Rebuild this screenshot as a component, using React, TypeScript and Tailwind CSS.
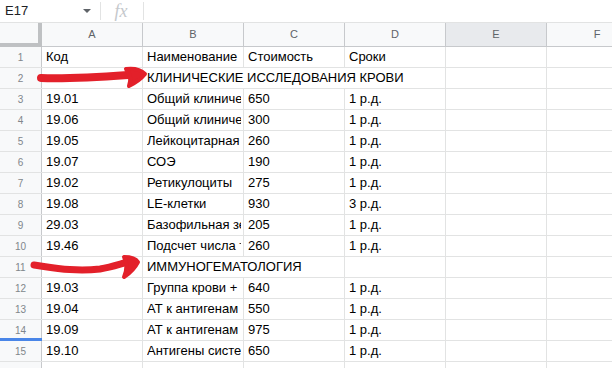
import React from "react";

type Row = { n: number; a?: string; b?: string; c?: string; d?: string; span?: 2 | 3 };

const rows: Row[] = [
  { n: 1, a: "Код", b: "Наименование", c: "Стоимость", d: "Сроки" },
  { n: 2, b: "КЛИНИЧЕСКИЕ ИССЛЕДОВАНИЯ КРОВИ", span: 3 },
  { n: 3, a: "19.01", b: "Общий клинический анализ крови", c: "650", d: "1 р.д." },
  { n: 4, a: "19.06", b: "Общий клинический анализ", c: "300", d: "1 р.д." },
  { n: 5, a: "19.05", b: "Лейкоцитарная формула", c: "260", d: "1 р.д." },
  { n: 6, a: "19.07", b: "СОЭ", c: "190", d: "1 р.д." },
  { n: 7, a: "19.02", b: "Ретикулоциты", c: "275", d: "1 р.д." },
  { n: 8, a: "19.08", b: "LE-клетки", c: "930", d: "3 р.д." },
  { n: 9, a: "29.03", b: "Базофильная зернистость", c: "205", d: "1 р.д." },
  { n: 10, a: "19.46", b: "Подсчет числа тромбоцитов", c: "260", d: "1 р.д." },
  { n: 11, b: "ИММУНОГЕМАТОЛОГИЯ", span: 2 },
  { n: 12, a: "19.03", b: "Группа крови + резус", c: "640", d: "1 р.д." },
  { n: 13, a: "19.04", b: "АТ к антигенам эритроцитов", c: "550", d: "1 р.д." },
  { n: 14, a: "19.09", b: "АТ к антигенам системы", c: "975", d: "1 р.д." },
  { n: 15, a: "19.10", b: "Антигены системы Kell", c: "650", d: "1 р.д." },
  { n: 16 },
];

function Cell({ text, w = "w-[101px]" }: { text?: string; w?: string }) {
  return (
    <div
      className={`flex h-full shrink-0 items-end border-r border-[#e2e3e3] pb-[1px] pl-[4px] pr-[2px] ${w}`}
    >
      <div className="min-w-0 flex-1 overflow-hidden whitespace-nowrap">{text}</div>
    </div>
  );
}

export default function App() {
  return (
    <div
      className="relative h-[368px] w-[612px] overflow-hidden bg-white text-black"
      style={{ fontFamily: '"Liberation Sans", Arial, sans-serif' }}
    >
      {/* formula bar */}
      <div className="flex h-[23px] items-center border-b border-[#e2e3e3] bg-white">
        <div className="flex w-[100px] items-center justify-between pl-[5px] pr-[9px] text-[13px] text-[#202124]">
          <span>E17</span>
          <span className="h-0 w-0 border-x-[4px] border-t-[4px] border-x-transparent border-t-[#5f6368]" />
        </div>
        <div className="h-[18px] w-px bg-[#e2e3e3]" />
        <div
          className="flex w-[42px] justify-center pr-[2px] text-[18px] italic text-[#c5c8cc]"
          style={{ fontFamily: '"Liberation Serif", serif' }}
        >
          fx
        </div>
        <div className="h-[18px] w-px bg-[#e2e3e3]" />
      </div>

      {/* column headers */}
      <div className="flex h-[24px] bg-[#f8f9fa] text-[11px] text-[#5f6368]">
        <div className="h-full w-[42px] shrink-0 border-b-[4px] border-r-[4px] border-[#bfc1c3] bg-[#f8f9fa]" />
        {["A", "B", "C", "D", "E", "F"].map((l) => (
          <div
            key={l}
            className={`flex h-full w-[101px] shrink-0 items-center justify-center border-b border-r border-[#c7c9cc] ${
              l === "E" ? "bg-[#e8eaed]" : ""
            }`}
          >
            {l}
          </div>
        ))}
      </div>

      {/* rows */}
      <div className="text-[13px]">
        {rows.map((r) => (
          <div key={r.n} className="flex h-[21px] border-b border-[#e2e3e3]">
            <div className="relative flex h-full w-[42px] shrink-0 items-center justify-center border-r border-[#c7c9cc] bg-[#f8f9fa] text-[10px] text-[#80868b]">
              {r.n}
              {r.n === 14 && (
                <div className="absolute bottom-[-1px] left-0 h-[3px] w-[42px] bg-[#4a86e8]" />
              )}
            </div>
            <Cell text={r.a} />
            {r.span === 3 ? (
              <Cell text={r.b} w="w-[303px]" />
            ) : r.span === 2 ? (
              <>
                <Cell text={r.b} w="w-[202px]" />
                <Cell />
              </>
            ) : (
              <>
                <Cell text={r.b} />
                <Cell text={r.c} />
                <Cell text={r.d} />
              </>
            )}
            <Cell />
            <Cell />
          </div>
        ))}
      </div>

      {/* red hand-drawn arrows (annotation overlay) */}
      <svg className="pointer-events-none absolute left-0 top-0" width="612" height="368">
        <g fill="none" stroke="#e3202a" strokeLinecap="round" strokeLinejoin="round">
          <path d="M41 78 C 70 79, 100 77, 128 75" strokeWidth="8" />
          <path
            d="M126 69 C 134 68, 141 70, 145 74 C 141 79, 135 83, 129 86 C 131 80, 131 76, 126 69 Z"
            fill="#e3202a"
            strokeWidth="4"
          />
          <path d="M34 265 C 55 268, 75 272, 100 269 C 112 267, 120 264, 128 262" strokeWidth="7" />
          <path
            d="M124 257 C 131 257, 136 259, 138 262 C 135 268, 130 273, 124 277 C 127 270, 128 264, 124 257 Z"
            fill="#e3202a"
            strokeWidth="4"
          />
        </g>
      </svg>
    </div>
  );
}
